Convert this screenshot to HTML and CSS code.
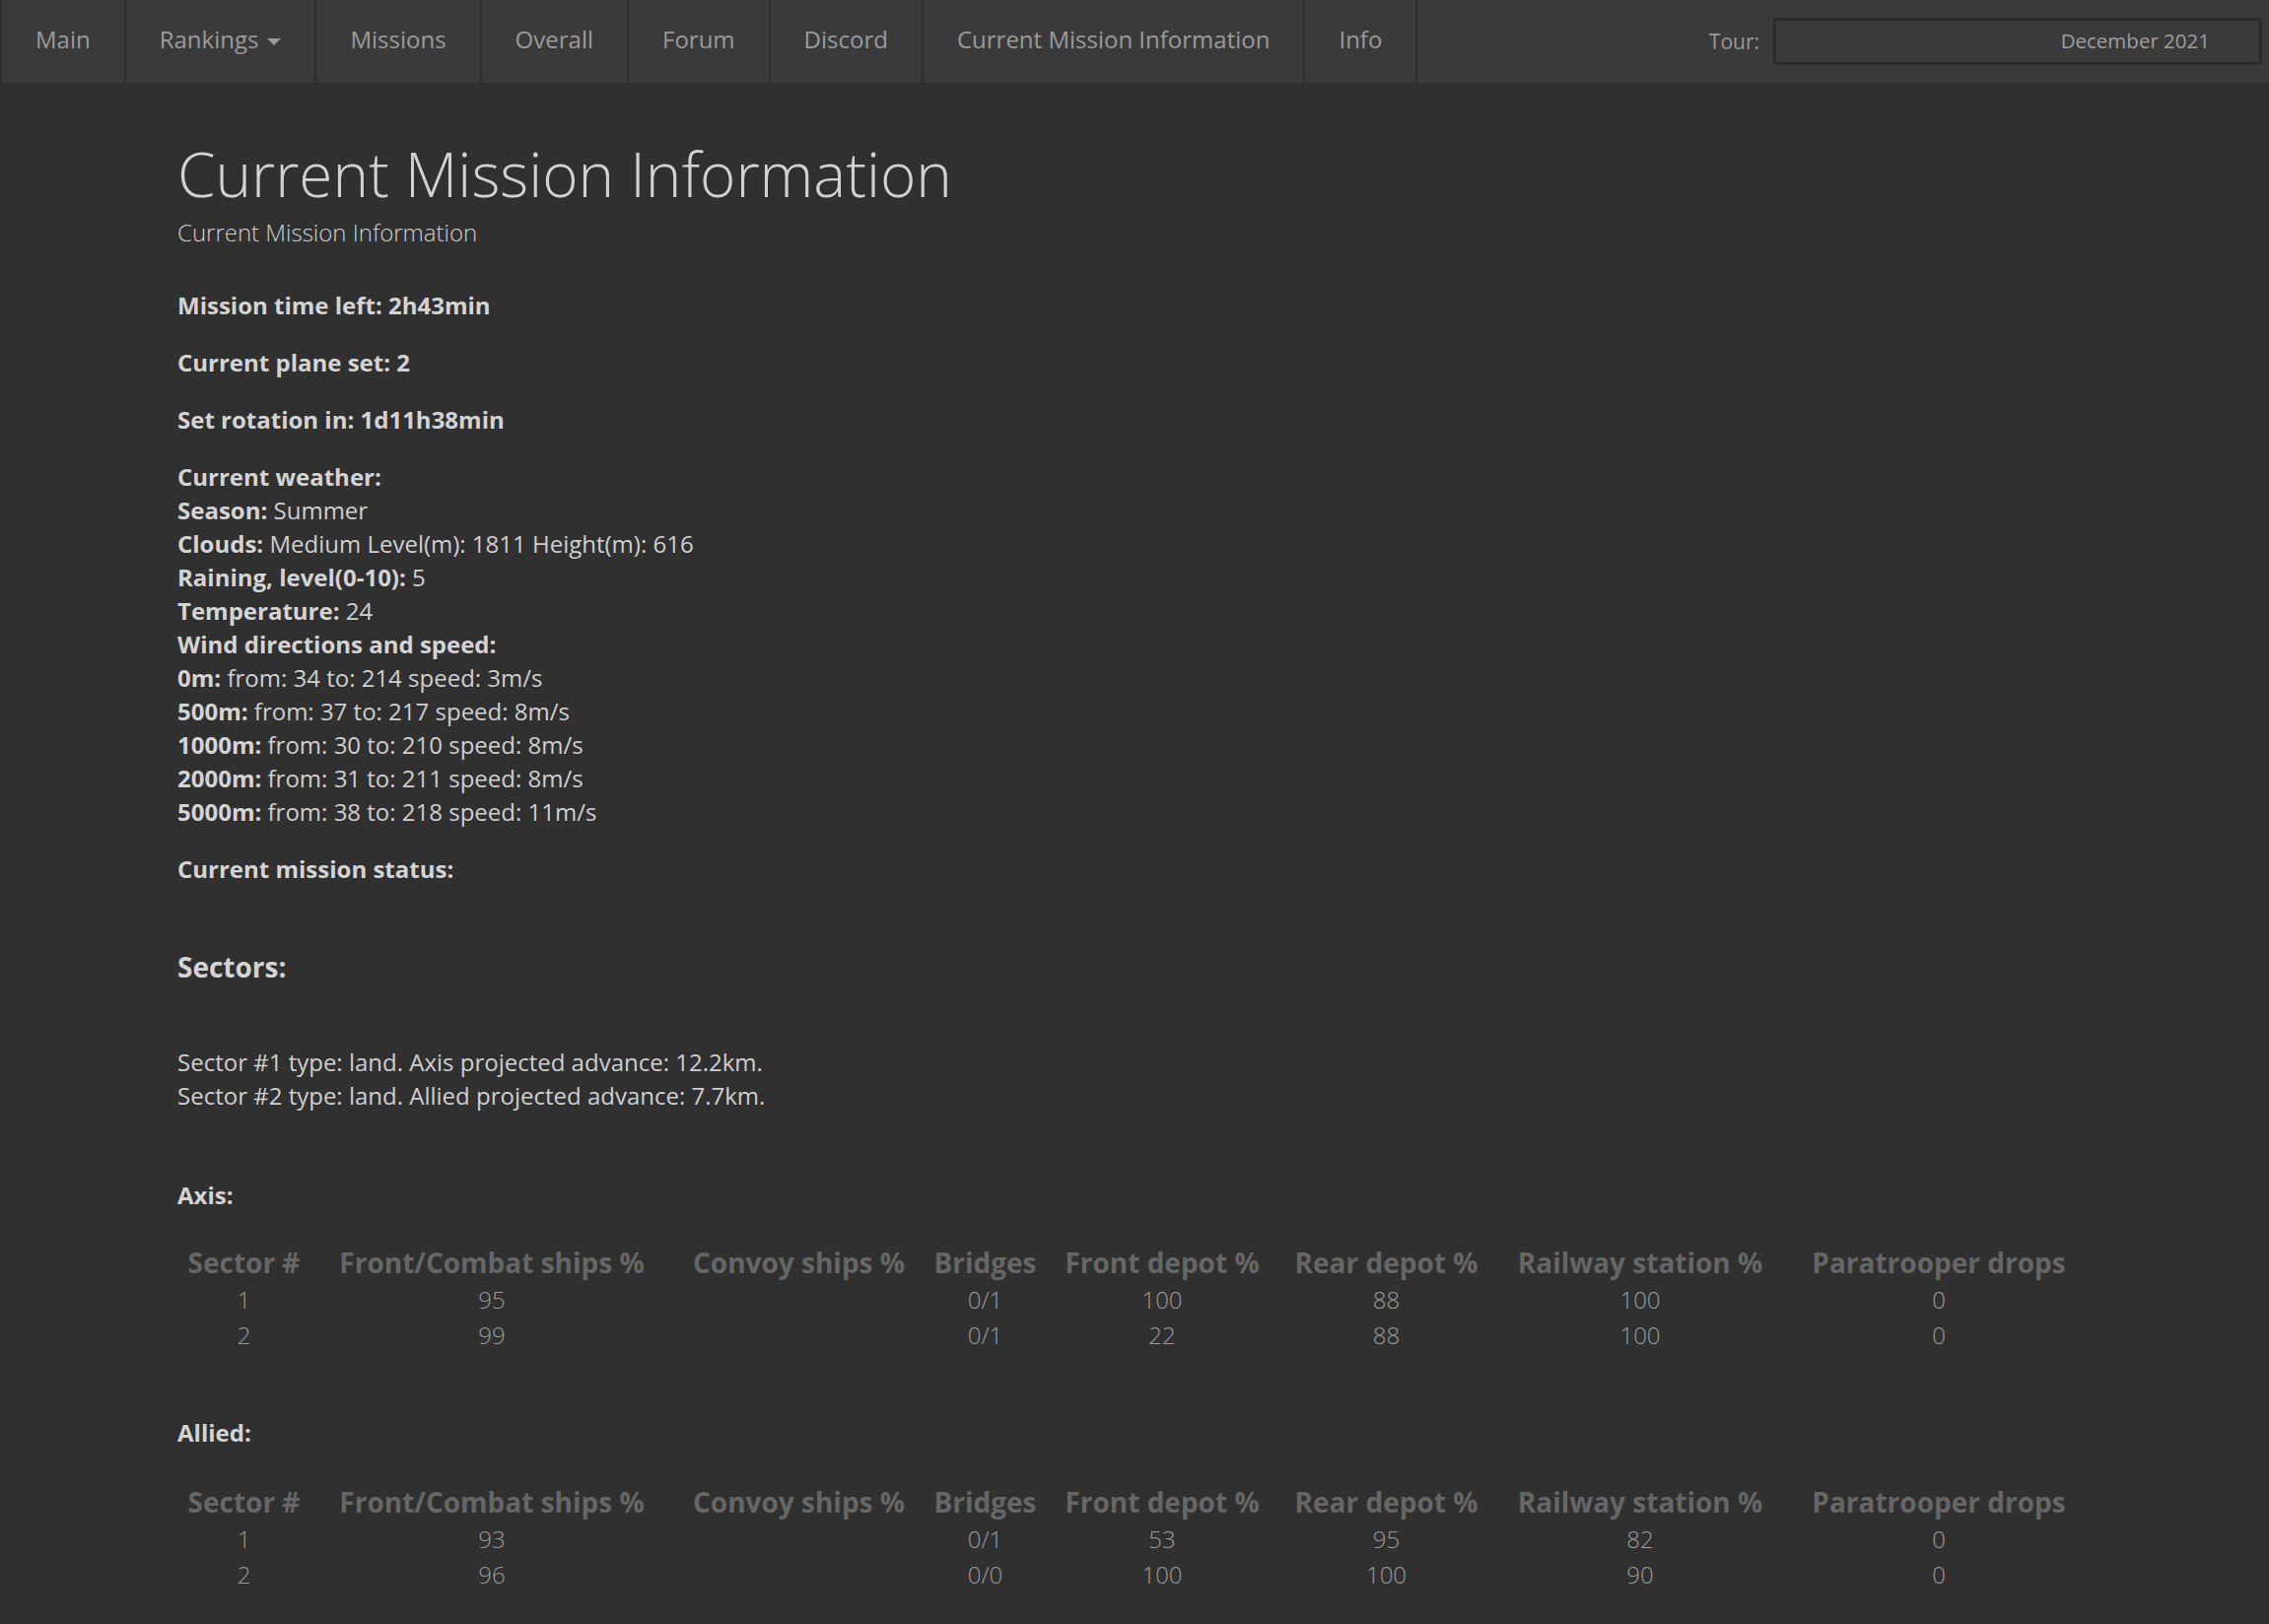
FILE: index.html
```html
<!DOCTYPE html>
<html lang="en">
<head>
<meta charset="utf-8">
<title>Current Mission Information</title>
<link rel="stylesheet" href="styles.css">
</head>
<body>
<nav class="navbar">
  <ul class="nav">
    <li class="nav-item">Main</li>
    <li class="nav-item">Rankings <span class="caret"></span></li>
    <li class="nav-item">Missions</li>
    <li class="nav-item">Overall</li>
    <li class="nav-item">Forum</li>
    <li class="nav-item">Discord</li>
    <li class="nav-item">Current Mission Information</li>
    <li class="nav-item">Info</li>
  </ul>
  <div class="tour">
    <span class="tour-label">Tour:</span>
    <div class="tour-select">December 2021</div>
  </div>
</nav>

<main class="page">
  <h1 class="title">Current Mission Information</h1>
  <p class="subtitle">Current Mission Information</p>

  <p class="para"><b>Mission time left: 2h43min</b></p>
  <p class="para"><b>Current plane set: 2</b></p>
  <p class="para"><b>Set rotation in: 1d11h38min</b></p>
  <p class="para">
    <b>Current weather:</b><br>
    <b>Season:</b> Summer<br>
    <b>Clouds:</b> Medium Level(m): 1811 Height(m): 616<br>
    <b>Raining, level(0-10):</b> 5<br>
    <b>Temperature:</b> 24<br>
    <b>Wind directions and speed:</b><br>
    <b>0m:</b> from: 34 to: 214 speed: 3m/s<br>
    <b>500m:</b> from: 37 to: 217 speed: 8m/s<br>
    <b>1000m:</b> from: 30 to: 210 speed: 8m/s<br>
    <b>2000m:</b> from: 31 to: 211 speed: 8m/s<br>
    <b>5000m:</b> from: 38 to: 218 speed: 11m/s
  </p>
  <p class="para"><b>Current mission status:</b></p>

  <h4 class="sectors">Sectors:</h4>
  <p class="sector-lines">
    Sector #1 type: land. Axis projected advance: 12.2km.<br>
    Sector #2 type: land. Allied projected advance: 7.7km.
  </p>

  <h5 class="side">Axis:</h5>
  <table class="stats">
    <thead>
      <tr>
        <th>Sector #</th><th>Front/Combat ships %</th><th>Convoy ships %</th><th>Bridges</th>
        <th>Front depot %</th><th>Rear depot %</th><th>Railway station %</th><th>Paratrooper drops</th>
      </tr>
    </thead>
    <tbody>
      <tr><td>1</td><td>95</td><td></td><td>0/1</td><td>100</td><td>88</td><td>100</td><td>0</td></tr>
      <tr><td>2</td><td>99</td><td></td><td>0/1</td><td>22</td><td>88</td><td>100</td><td>0</td></tr>
    </tbody>
  </table>

  <h5 class="side side-allied">Allied:</h5>
  <table class="stats">
    <thead>
      <tr>
        <th>Sector #</th><th>Front/Combat ships %</th><th>Convoy ships %</th><th>Bridges</th>
        <th>Front depot %</th><th>Rear depot %</th><th>Railway station %</th><th>Paratrooper drops</th>
      </tr>
    </thead>
    <tbody>
      <tr><td>1</td><td>93</td><td></td><td>0/1</td><td>53</td><td>95</td><td>82</td><td>0</td></tr>
      <tr><td>2</td><td>96</td><td></td><td>0/0</td><td>100</td><td>100</td><td>90</td><td>0</td></tr>
    </tbody>
  </table>
</main>
</body>
</html>
```

FILE: styles.css
```css
html, body {
  margin: 0;
  padding: 0;
}
body {
  background: #303030;
  color: #cfcfcf;
  font-family: "Open Sans", "Noto Sans", "DejaVu Sans", sans-serif;
  font-size: 24px;
  line-height: 34px;
  min-height: 1648px;
}

/* NAVBAR */
.navbar {
  display: flex;
  align-items: stretch;
  height: 84px;
  background: #3a3a3a;
}
.nav {
  display: flex;
  margin: 0;
  padding: 0 0 0 3px;
  list-style: none;
  border-left: 2px solid #2e2e2e;
  box-sizing: border-box;
}
.nav-item {
  display: flex;
  align-items: center;
  padding: 0 34px 4px 34px;
  color: #9a9a9a;
  font-size: 24px;
  border-right: 2px solid #2e2e2e;
  white-space: nowrap;
}
.nav-item:first-child {
  margin-left: -3px;
}
.caret {
  display: inline-block;
  width: 0;
  height: 0;
  margin-left: 9px;
  margin-top: 4px;
  border-left: 7px solid transparent;
  border-right: 7px solid transparent;
  border-top: 7px solid #9a9a9a;
}
.tour {
  margin-left: auto;
  display: flex;
  align-items: center;
  padding-right: 7px;
  gap: 14px;
}
.tour-label {
  color: #9a9a9a;
  font-size: 21px;
}
.tour-select {
  width: 496px;
  height: 48px;
  box-sizing: border-box;
  border: 3px solid #2c2c2c;
  background: #3a3a3a;
  color: #9e9e9e;
  font-size: 20.5px;
  line-height: 40px;
  text-align: right;
  padding-right: 50px;
}

/* CONTENT */
.page {
  padding: 0 180px 40px 180px;
}
.title {
  margin: 56px 0 0 0;
  font-size: 62px;
  line-height: 72px;
  font-weight: 300;
  color: #d2d2d2;
}
.subtitle {
  margin: 7px 0 0 0;
  font-weight: 300;
  color: #cfcfcf;
}
.para {
  margin: 0 0 24px 0;
}
.subtitle + .para {
  margin-top: 40px;
}
b {
  font-weight: 700;
  color: #d4d4d4;
}
.sectors {
  margin: 65px 0 0 0;
  font-size: 28px;
  line-height: 34px;
  font-weight: 700;
  color: #d4d4d4;
}
.sector-lines {
  margin: 63px 0 0 0;
}
.side {
  margin: 67px 0 0 0;
  font-size: 24px;
  line-height: 34px;
  font-weight: 700;
  color: #d4d4d4;
}
.side-allied {
  margin-top: 64px;
}
.stats {
  margin-top: 33px;
  width: 1942px;
  border-collapse: collapse;
  table-layout: fixed;
}
.side-allied + .stats {
  margin-top: 35px;
}
.stats th {
  font-size: 28px;
  line-height: 36px;
  padding: 0 0 2px 0;
  font-weight: 700;
  color: #666666;
  text-align: center;
  white-space: nowrap;
}
.stats td {
  padding: 0;
  line-height: 36px;
  font-weight: 300;
  color: #9a9a9a;
  text-align: center;
}
.stats th:nth-child(1) { width: 135px; }
.stats th:nth-child(2) { width: 368px; }
.stats th:nth-child(3) { width: 255px; }
.stats th:nth-child(4) { width: 123px; }
.stats th:nth-child(5) { width: 236px; }
.stats th:nth-child(6) { width: 219px; }
.stats th:nth-child(7) { width: 296px; }
.stats th:nth-child(8) { width: 310px; }
```
